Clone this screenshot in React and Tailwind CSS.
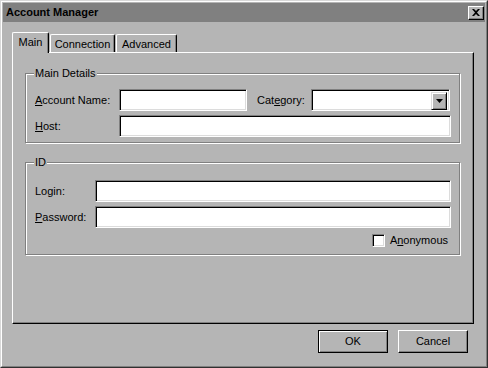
import React from "react";

const sunken =
  "border border-t-[#808080] border-l-[#808080] border-r-white border-b-white shadow-[inset_1px_1px_0_black,inset_-1px_-1px_0_#dcdcdc] bg-white";

const etched =
  "border border-[#808080] shadow-[1px_1px_0_white,inset_1px_1px_0_white] m-0 p-0 min-w-0";

function Input({ w }) {
  return <div className={`${sunken} h-[22px] ${w}`} />;
}

export default function App() {
  return (
    <div className="w-[488px] h-[368px] bg-[#b5b5b5] border border-t-[#d8d8d8] border-l-[#d8d8d8] border-r-[#303030] border-b-[#303030] font-['Liberation_Sans',Arial,sans-serif] text-[11px] text-black leading-[13px]">
      <div className="h-full border border-t-white border-l-white border-r-[#808080] border-b-[#808080] p-px flex flex-col">
        {/* Title bar */}
        <div className="h-[19px] bg-[#808080] flex items-center justify-between pl-[3px] pr-[1px]">
          <span className="font-bold text-[11px]">Account Manager</span>
          <div className="w-[16px] h-[14px] bg-[#b5b5b5] border border-t-white border-l-white border-r-black border-b-black shadow-[inset_-1px_-1px_0_#808080] flex items-center justify-center">
            <svg width="8" height="7" viewBox="0 0 8 7">
              <path d="M0 0 L2 0 L4 2 L6 0 L8 0 L5 3.5 L8 7 L6 7 L4 5 L2 7 L0 7 L3 3.5 Z" fill="black" />
            </svg>
          </div>
        </div>

        {/* Tabs */}
        <div className="ml-[9px] mt-[10px] w-[462px]">
          <div className="flex items-end h-[20px] relative z-10">
            <div className="w-[37px] h-[21px] -mb-px bg-[#b5b5b5] border-t border-l border-r border-t-white border-l-white border-r-black shadow-[inset_-1px_0_0_#808080] rounded-tl-[2px] rounded-tr-[2px] flex justify-center pt-[3px]">
              Main
            </div>
            <div className="ml-px w-[65px] h-[18px] bg-[#b5b5b5] border-t border-l border-r border-t-white border-l-white border-r-black shadow-[inset_-1px_0_0_#808080] rounded-tl-[2px] rounded-tr-[2px] flex justify-center pt-[3px]">
              Connection
            </div>
            <div className="ml-px w-[61px] h-[18px] bg-[#b5b5b5] border-t border-l border-r border-t-white border-l-white border-r-black shadow-[inset_-1px_0_0_#808080] rounded-tl-[2px] rounded-tr-[2px] flex justify-center pt-[3px]">
              Advanced
            </div>
          </div>

          {/* Panel */}
          <div className="h-[272px] border border-t-white border-l-white border-r-black border-b-black shadow-[inset_-1px_-1px_0_#808080] pl-[12px]">
            <fieldset className={`${etched} w-[435px] mt-[14px]`}>
              <legend className="ml-[8px] px-px leading-[13px] bg-[#b5b5b5]">Main Details</legend>
              <div className="pt-[9px] pb-[5px] pl-[9px] flex flex-col gap-[4px]">
                <div className="flex items-center h-[22px]">
                  <span className="w-[84px]">
                    <u className="underline-offset-[1px]">A</u>ccount Name:
                  </span>
                  <Input w="w-[128px]" />
                  <span className="ml-[10px] w-[54px]">
                    Cat<u className="underline-offset-[1px]">e</u>gory:
                  </span>
                  <div className={`${sunken} h-[22px] w-[139px] flex justify-end items-start pt-[2px] pr-[2px]`}>
                    <div className="w-[16px] h-[18px] bg-[#b5b5b5] border border-t-[#dcdcdc] border-l-[#dcdcdc] border-r-black border-b-black shadow-[inset_1px_1px_0_white,inset_-1px_-1px_0_#808080] flex items-center justify-center">
                      <svg width="7" height="4" viewBox="0 0 7 4">
                        <path d="M0 0 H7 L3.5 4 Z" fill="black" />
                      </svg>
                    </div>
                  </div>
                </div>
                <div className="flex items-center h-[22px]">
                  <span className="w-[84px]">
                    <u className="underline-offset-[1px]">H</u>ost:
                  </span>
                  <Input w="w-[332px]" />
                </div>
              </div>
            </fieldset>

            <fieldset className={`${etched} w-[435px] mt-[13px]`}>
              <legend className="ml-[8px] px-px leading-[13px] bg-[#b5b5b5]">ID</legend>
              <div className="pt-[11px] pb-[7px] pl-[9px] pr-[8px] flex flex-col gap-[4px]">
                <div className="flex items-center h-[22px]">
                  <span className="w-[60px]">Login:</span>
                  <Input w="w-[356px]" />
                </div>
                <div className="flex items-center h-[22px]">
                  <span className="w-[60px]">
                    <u className="underline-offset-[1px]">P</u>assword:
                  </span>
                  <Input w="w-[356px]" />
                </div>
                <div className="flex items-center justify-end h-[13px] mt-[2px] mr-[3px] gap-[5px]">
                  <div className={`${sunken} w-[13px] h-[13px]`} />
                  <span>
                    A<u className="underline-offset-[1px]">n</u>onymous
                  </span>
                </div>
              </div>
            </fieldset>
          </div>

          {/* Buttons */}
          <div className="flex justify-end gap-[10px] pr-[6px] mt-[6px]">
            <button className="w-[70px] h-[23px] bg-[#b5b5b5] border border-black shadow-[inset_1px_1px_0_white,inset_-1px_-1px_0_#808080] flex items-center justify-center">
              OK
            </button>
            <button className="w-[70px] h-[23px] bg-[#b5b5b5] border border-t-white border-l-white border-r-black border-b-black shadow-[inset_-1px_-1px_0_#808080] flex items-center justify-center">
              Cancel
            </button>
          </div>
        </div>
      </div>
    </div>
  );
}
